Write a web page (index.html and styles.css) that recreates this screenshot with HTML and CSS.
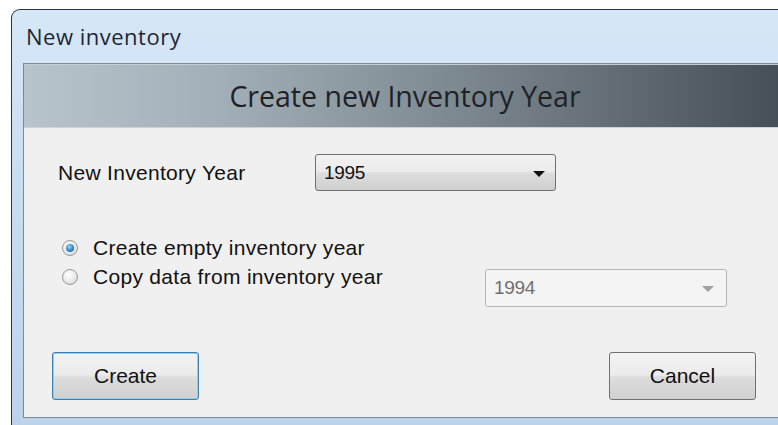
FILE: index.html
```html
<!DOCTYPE html>
<html lang="en">
<head>
<meta charset="utf-8">
<title>New inventory</title>
<link rel="stylesheet" href="styles.css">
</head>
<body>
<div class="window">
  <div class="titlebar">New inventory</div>
  <div class="client">
    <div class="banner">Create new Inventory Year</div>
    <div class="form">
      <div class="row year-row">
        <span class="label">New Inventory Year</span>
        <div class="combo">
          <span class="combo-value">1995</span>
          <span class="arrow"></span>
        </div>
      </div>
      <div class="options">
        <label class="option">
          <span class="radio checked"></span>
          <span>Create empty inventory year</span>
        </label>
        <div class="option copy-row">
          <label class="option-label">
            <span class="radio"></span>
            <span>Copy data from inventory year</span>
          </label>
          <div class="combo disabled">
            <span class="combo-value">1994</span>
            <span class="arrow"></span>
          </div>
        </div>
      </div>
      <div class="buttons">
        <button class="btn default">Create</button>
        <button class="btn">Cancel</button>
      </div>
    </div>
  </div>
</div>
</body>
</html>
```

FILE: styles.css
```css
html, body {
  margin: 0;
  padding: 0;
  background: #ffffff;
  width: 778px;
  height: 425px;
  overflow: hidden;
}

/* window frame, running off the right and bottom edges */
.window {
  margin: 9px 0 0 11px;
  width: 767px;
  height: 416px;
  border: 1px solid #2c3640;
  border-right: none;
  border-bottom: none;
  border-radius: 9px 0 0 0;
  background: linear-gradient(to bottom, #d6e7f7 0%, #cadef2 40%, #bcd3ea 100%);
  box-sizing: border-box;
  padding: 0 0 0 11px;
  overflow: hidden;
}

.titlebar {
  height: 53px;
  display: flex;
  align-items: center;
  padding-left: 3px;
  padding-bottom: 2px;
  font-family: "Open Sans", "Noto Sans", sans-serif;
  font-size: 22px;
  letter-spacing: 0.5px;
  color: #1d2733;
  box-sizing: border-box;
}

.client {
  border: 1px solid #7d8a96;
  border-right: none;
  background: #f0f0f0;
  height: 355px;
  box-sizing: border-box;
}

.banner {
  height: 64px;
  display: flex;
  align-items: center;
  justify-content: center;
  padding-left: 8px;
  font-family: "Open Sans", "Noto Sans", sans-serif;
  font-size: 28.5px;
  color: #1e2225;
  background: linear-gradient(to right, #b8c4cc 0%, #a4b0b9 25%, #86929a 50%, #66717a 75%, #464f56 100%);
  border-top: 1px solid #c3cdd4;
  border-bottom: 1px solid #cdd2d6;
  box-sizing: border-box;
}

.form {
  font-family: "Liberation Sans", Arial, sans-serif;
  font-size: 21px;
  letter-spacing: 0.3px;
  color: #111111;
  padding-left: 34px;
}

.row {
  display: flex;
  align-items: center;
}

.year-row {
  margin-top: 26px;
}

.label {
  width: 257px;
  flex: none;
}

.combo {
  width: 241px;
  height: 37px;
  box-sizing: border-box;
  border: 1px solid #707070;
  border-radius: 3px;
  background: linear-gradient(to bottom, #f2f2f2 0%, #ebebeb 48%, #dddddd 52%, #cfcfcf 100%);
  display: flex;
  align-items: center;
  justify-content: space-between;
  padding: 0 10px 0 8px;
  font-size: 19px;
  letter-spacing: -0.3px;
}

.arrow {
  width: 0;
  height: 0;
  border-left: 6px solid transparent;
  border-right: 6px solid transparent;
  border-top: 6px solid #111111;
  margin-top: 2px;
}

.combo.disabled {
  width: 242px;
  height: 38px;
  border-color: #b4b4b4;
  background: #f4f4f4;
  color: #707070;
  margin-top: 7px;
  padding-right: 12px;
}

.combo.disabled .arrow {
  border-top-color: #a0a0a0;
}

.options {
  margin-top: 42px;
  padding-left: 4px;
}

.option {
  display: flex;
  align-items: center;
  height: 29px;
}

.copy-row {
  align-items: flex-start;
  height: auto;
}

.option-label {
  display: flex;
  align-items: center;
  width: 423px;
  flex: none;
  height: 29px;
}

.radio {
  width: 16px;
  height: 16px;
  border-radius: 50%;
  box-sizing: border-box;
  border: 1px solid #9a9a9a;
  background: radial-gradient(circle at 40% 35%, #ffffff 0%, #e6e6e6 60%, #cfcfcf 100%);
  margin-right: 15px;
  flex: none;
  position: relative;
}

.radio.checked::after {
  content: "";
  position: absolute;
  left: 3px;
  top: 3px;
  width: 8px;
  height: 8px;
  border-radius: 50%;
  background: radial-gradient(circle at 40% 35%, #9fd6f5 0%, #2f87c4 55%, #1a5a8c 100%);
}

.buttons {
  display: flex;
  justify-content: space-between;
  width: 704px;
  margin-left: -6px;
  margin-top: 45px;
}

.btn {
  width: 147px;
  height: 48px;
  border: 1px solid #707070;
  border-radius: 3px;
  background: linear-gradient(to bottom, #f3f3f3 0%, #ebebeb 48%, #dddddd 52%, #d0d0d0 100%);
  font-family: "Liberation Sans", Arial, sans-serif;
  font-size: 21px;
  color: #111111;
  padding: 0;
}

.btn.default {
  border-color: #3c7fb1;
  box-shadow: inset 0 0 0 1px #8fd0ee;
}
```
